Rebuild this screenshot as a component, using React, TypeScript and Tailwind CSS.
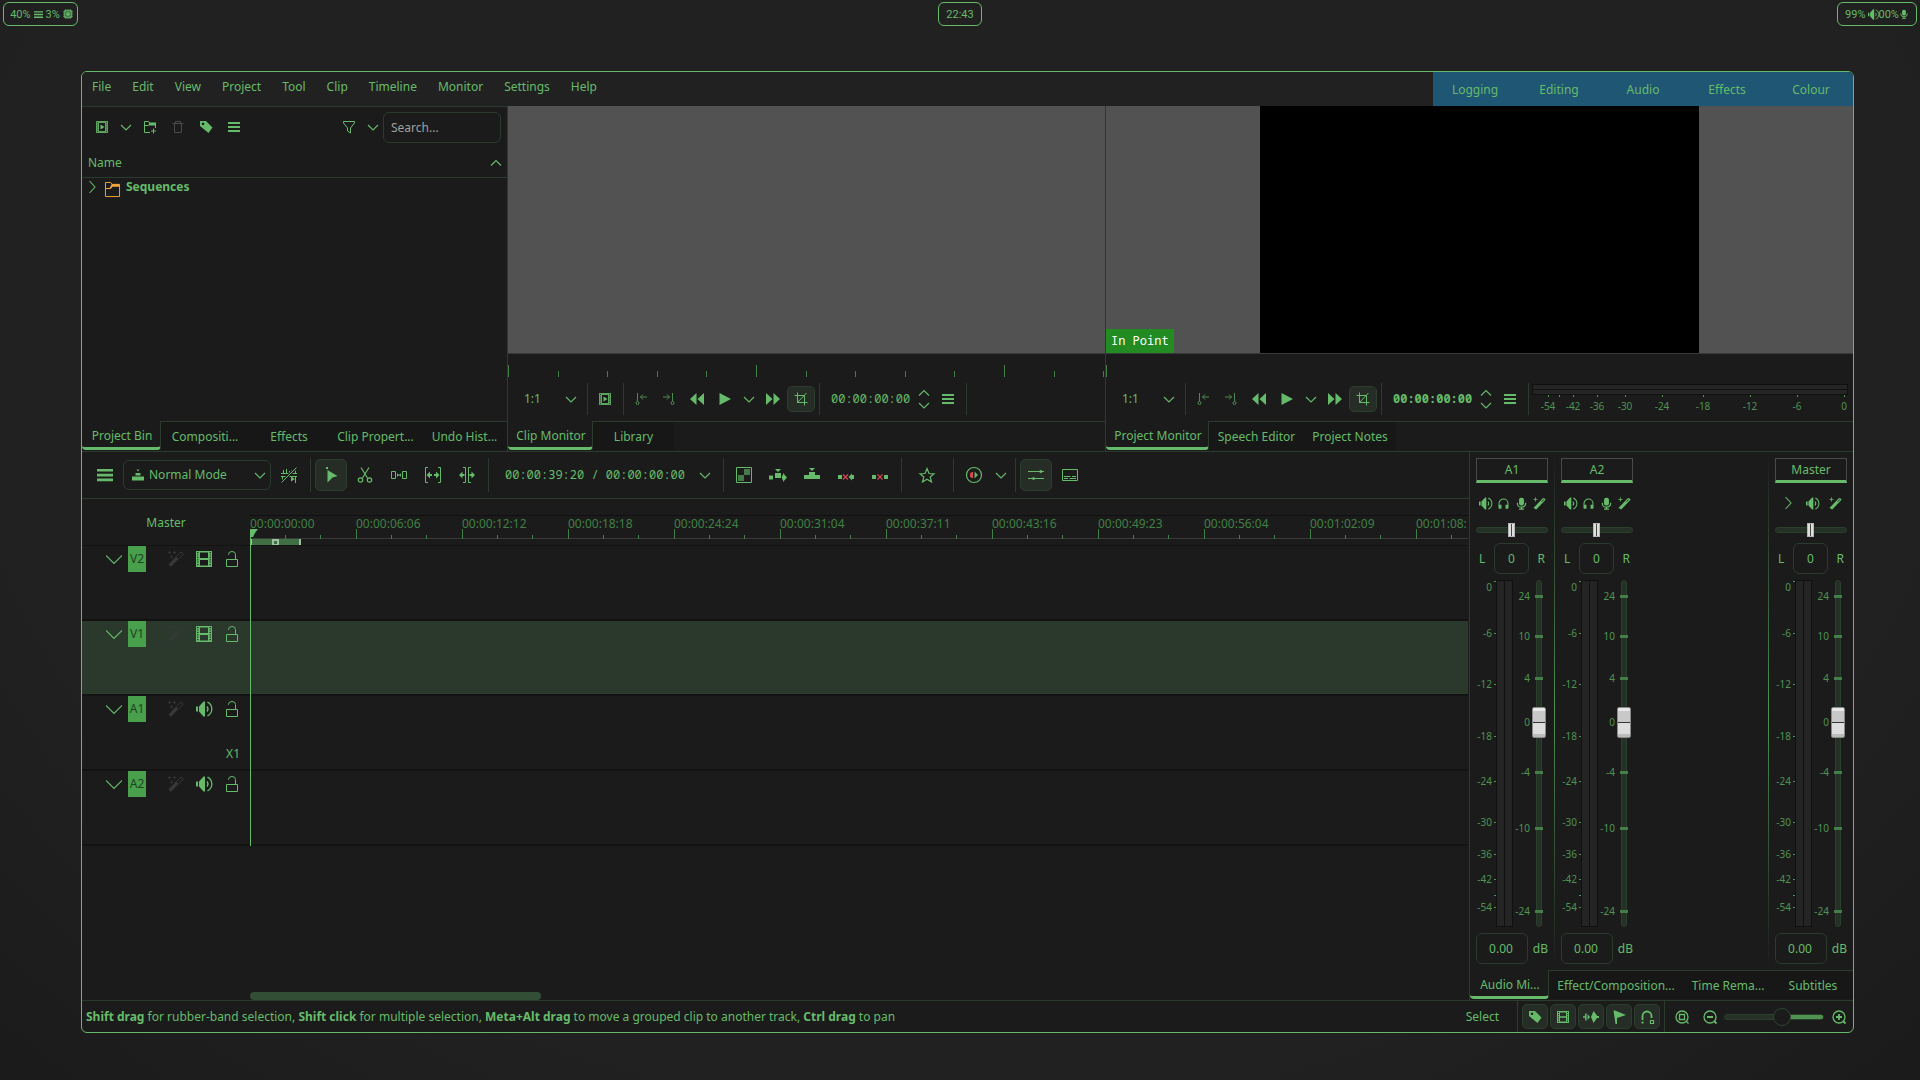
import React from "react";

const icons: Record<string, React.ReactNode> = {
  menu: <path d="M0 2h16v2.6H0zM0 6.8h16v2.6H0zM0 11.6h16v2.6H0z" fill="currentColor" />,
  menuSmall: <path d="M2 3h12v2H2zM2 7h12v2H2zM2 11h12v2H2z" fill="currentColor" />,
  clip: (
    <>
      <path d="M2 2h12v12H2zM5 4v8h6V4z" fill="currentColor" fillRule="evenodd" opacity=".85" />
      <path d="M3.500 3v10M12.500 3v10" stroke="#1b1b1b" strokeDasharray="1 1.250" opacity=".7" />
      <path d="M6.500 5.500v5l4-2.500z" fill="currentColor" />
    </>
  ),
  down: <path d="M3 6l5 5 5-5" fill="none" stroke="currentColor" strokeWidth="1.100" />,
  up: <path d="M3 10.500l5-5 5 5" fill="none" stroke="currentColor" strokeWidth="1.100" />,
  right: <path d="M5.500 2l5.500 6-5.500 6" fill="none" stroke="currentColor" strokeWidth="1.100" />,
  folderAdd: (
    <>
      <path d="M8 13.500H2.500v-11h4l1.500 2h5.500V9M2.500 6.500H6l2-1.500" fill="none" stroke="currentColor" />
      <path d="M7 3.500h7v3H7z" fill="currentColor" />
      <path d="M11.500 9.500v5M9 12h5" stroke="currentColor" />
    </>
  ),
  folder: (
    <>
      <path d="M.5 .5H6l1.500 2h8v13H.5z" fill="none" stroke="currentColor" />
      <path d="M7 2.500h8.500V5H8L6 7.500H1v-1h4z" fill="currentColor" />
    </>
  ),
  trash: <path d="M2.500 4.500h11M5.500 4.500v-2h5v2M4.500 5v8.500h7V5" fill="none" stroke="currentColor" />,
  tag: (
    <path d="M2 2h6l6.500 6.500-4 5.500L2 7zM5 3.500a1.300 1.300 0 1 0 .01 0z" fill="currentColor" fillRule="evenodd" />
  ),
  filter: <path d="M2.500 2.500h11v1.500L9.500 9v5l-3-2V9l-4-5z" fill="none" stroke="currentColor" />,
  markIn: (
    <>
      <path d="M4.500 2v8M14 6H7.500M10 3.500L7.500 6l2.500 2.500" fill="none" stroke="currentColor" />
      <circle cx="4.500" cy="12" r="1.500" fill="none" stroke="currentColor" />
    </>
  ),
  markOut: (
    <>
      <path d="M11.500 2v8M2 6h6.500M6 3.500L8.500 6 6 8.500" fill="none" stroke="currentColor" />
      <circle cx="11.500" cy="12" r="1.500" fill="none" stroke="currentColor" />
    </>
  ),
  rewind: <path d="M7.500 2v12L1 8zM15 2v12L8.500 8z" fill="currentColor" />,
  play: <path d="M2.500 2v12L14 8z" fill="currentColor" />,
  forward: <path d="M8.500 2v12L15 8zM1 2v12l6.500-6z" fill="currentColor" />,
  crop: <path d="M4.500 1.500v10h10M1.500 4.500h10v10M4 12L13.500 2" fill="none" stroke="currentColor" />,
  normal: <path d="M2 9.500h12v4H2zM5.500 6h5v2.500h-5zM6.500 2.500h3L8 4.500z" fill="currentColor" />,
  noSnap: (
    <>
      <path
        d="M0 6.500h16M0 9.500h16M2.500 3v3M5.500 2v4M8.500 4v2M1.500 10v4M4.500 10v3M10.500 3v3M14.500 1v5M14.500 10v6"
        stroke="currentColor"
        fill="none"
      />
      <path d="M10 9.500v5l4-2.500z" fill="currentColor" />
      <path d="M15.500 .5L.5 15.500" stroke="#1b1b1b" strokeWidth="3" />
      <path d="M15.500 .5L.5 15.500" stroke="currentColor" />
    </>
  ),
  pointer: <path d="M3 0h2v2H3zM4.500 3l10 6-5 1.500-5 5z" fill="currentColor" />,
  scissors: (
    <>
      <path d="M4 .5l6.500 10.500M12 .5L5.500 11" fill="none" stroke="currentColor" strokeWidth="1.200" />
      <circle cx="3.500" cy="13" r="2.200" fill="none" stroke="currentColor" strokeWidth="1.200" />
      <circle cx="12.500" cy="13" r="2.200" fill="none" stroke="currentColor" strokeWidth="1.200" />
    </>
  ),
  spacer: (
    <>
      <path d="M.5 4.500h4v7h-4zM11.500 4.500h4v7h-4zM6 8h4" fill="none" stroke="currentColor" />
      <path d="M6 6v4l1.500-2zM10 6v4L8.500 8z" fill="currentColor" />
    </>
  ),
  ripple: (
    <>
      <path d="M3 .5H.5v15H3M13 .5h2.500v15H13" fill="none" stroke="currentColor" />
      <path d="M1.500 8L5 4.500V7h2v2H5v2.500zM14.500 8L11 4.500V7H9v2h2v2.500z" fill="currentColor" />
    </>
  ),
  roll: (
    <>
      <path d="M4 .5h2.500v15H4M12 .5H9.500v15H12" fill="none" stroke="currentColor" />
      <path d="M0 8l3.500-3.500V7h2v2h-2v2.500zM16 8l-3.500-3.500V7h-2v2h2v2.500z" fill="currentColor" />
    </>
  ),
  checker: (
    <>
      <path d="M.5 .5h15v15H.5z" fill="none" stroke="currentColor" />
      <path d="M8 2h6v6H8zM2 8h6v6H2z" fill="currentColor" opacity=".6" />
    </>
  ),
  insert: <path d="M5 2h6L8 5zM5 6h6v5H5zM-1 8.500h4v4h-4zM12 8.500h1V6l4 4.500-4 4.500v-2.500h-1z" fill="currentColor" />,
  overwrite: <path d="M5 1h6L8 4zM5 5h6v3h5v4H0V8h5z" fill="currentColor" />,
  extract: (
    <>
      <path d="M0 8h4v4H0zM14 8h2v4h-2z" fill="currentColor" />
      <path d="M5 7.500l5 5M10 7.500l-5 5" stroke="#da4453" strokeWidth="1.200" />
      <path d="M10.500 10l3.500-3.500v7z" fill="currentColor" />
    </>
  ),
  lift: (
    <>
      <path d="M0 8h4v4H0zM12 8h4v4h-4z" fill="currentColor" />
      <path d="M5.500 7.500l5 5M10.500 7.500l-5 5" stroke="#da4453" strokeWidth="1.200" />
    </>
  ),
  star: (
    <path
      d="M8 1.500l2 5 5 .3-3.800 3.200 1.300 5L8 12.200 3.500 15l1.300-5L1 6.800l5-.3z"
      fill="none"
      stroke="currentColor"
      strokeWidth="1.200"
    />
  ),
  record: (
    <>
      <circle cx="8" cy="8" r="7.500" fill="none" stroke="currentColor" strokeWidth="1.200" />
      <path d="M7 5v6H5.500L4 9.500v-3L5.500 5z" fill="#da4453" />
      <path d="M8.500 4.500L12 8l-3.500 3.500z" fill="currentColor" />
    </>
  ),
  mixer: (
    <>
      <path d="M0 4.500h16M0 11.500h16" stroke="currentColor" />
      <path
        d="M11 4.500L13 3l1.500 1.500L13 6zM4 11.500L5.500 10 7 11.500 5.500 13z"
        fill="currentColor"
        stroke="currentColor"
        strokeWidth=".6"
      />
    </>
  ),
  subtitle: <path d="M.5 2.500h15v11H.5zM2 9.500h6.500M10 9.500h4M2 11.500h4M7.500 11.500H14" fill="none" stroke="currentColor" />,
  wand: (
    <>
      <path d="M.5 13.500l7.500-8 2.500 2.500L3 15.800z" fill="currentColor" />
      <path d="M8.500 5.500l4.500-4.500 2.300 2.300-4.500 4.500" fill="none" stroke="currentColor" />
      <path d="M1.500 0v3M0 1.500h3M6.500 0v3M5 1.500h3M3.500 4.500v3M2 6h3" stroke="currentColor" strokeWidth=".8" />
    </>
  ),
  film: (
    <>
      <path d="M0 0h16v16H0zM4 1.500v5.500h8V1.500zM4 9v5.500h8V9z" fill="currentColor" fillRule="evenodd" />
      <path d="M1.800 1v14M14.200 1v14" stroke="#1b1b1b" strokeWidth="1.200" strokeDasharray="1.200 1.200" />
    </>
  ),
  filmSmall: (
    <>
      <path d="M2 2h12v12H2zM5 3.500v3.700h6V3.500zM5 8.800v3.700h6V8.800z" fill="currentColor" fillRule="evenodd" />
      <path d="M3.500 3v10M12.500 3v10" stroke="#1b1b1b" strokeWidth="1" strokeDasharray="1 1.200" />
    </>
  ),
  lock: <path d="M2.500 8.500h11v7h-11zM4.500 4V3.500a3.500 3 0 0 1 7 0v5" fill="none" stroke="currentColor" />,
  speaker: (
    <>
      <path d="M0 5.500h2v5H0zM3 5.500L7.500 .5H9v15H7.500L3 10.500z" fill="currentColor" />
      <path d="M11 5.500a4 4 0 0 1 0 5M11.500 1.200a7.500 7.500 0 0 1 0 13.600" fill="none" stroke="currentColor" strokeWidth="1.300" />
    </>
  ),
  headphones: (
    <>
      <path d="M2.500 14V8a5.500 5.500 0 0 1 11 0v6" fill="none" stroke="currentColor" strokeWidth="1.300" />
      <path d="M2.500 9.500h3v5h-3zM10.500 9.500h3v5h-3z" fill="currentColor" />
    </>
  ),
  mic: (
    <>
      <rect x="5" y="1" width="6" height="9.500" rx="2.500" fill="currentColor" />
      <path d="M3 7v1.500a5 4 0 0 0 10 0V7M8 12v3M5 15h6" fill="none" stroke="currentColor" strokeWidth="1.500" />
    </>
  ),
  effects: (
    <>
      <path d="M.5 13.500L12 1.500h2l1.500 2L4 15.500z" fill="currentColor" />
      <path d="M10.500 5.500L13 3.500" stroke="#1b1b1b" strokeWidth="1.200" />
      <path d="M3 .5v5M.5 3h5" stroke="currentColor" />
    </>
  ),
  wave: <path d="M0 7.200h2V5l1.500-1v8L2 11V8.800H0zM4.500 5L7 8l-2.500 3zM8 8l2.500-6L14 6.500V7h2v2h-2L10.500 14z" fill="currentColor" />,
  flag: <path d="M2.500 1.500h1.500L15 6 6 9v6H4.500z" fill="currentColor" />,
  magnet: (
    <>
      <path d="M3.500 11V7a4.500 4.500 0 0 1 9 0v2" fill="none" stroke="currentColor" strokeWidth="1.800" />
      <path d="M2.500 12.500h2v2h-2z" fill="currentColor" />
      <path d="M11.500 11.500h3v3h-3z" fill="none" stroke="currentColor" strokeWidth="1.200" />
    </>
  ),
  zoomFit: (
    <>
      <circle cx="8" cy="8" r="6" fill="none" stroke="currentColor" strokeWidth="1.300" />
      <path d="M12.500 12.500l2 2M5.500 5.500h5v5h-5z" fill="none" stroke="currentColor" strokeWidth="1.300" />
    </>
  ),
  zoomOut: (
    <>
      <circle cx="8" cy="8" r="6" fill="none" stroke="currentColor" strokeWidth="1.300" />
      <path d="M12.500 12.500l2 2M5 8h6" stroke="currentColor" strokeWidth="1.800" />
    </>
  ),
  zoomIn: (
    <>
      <circle cx="8" cy="8" r="6" fill="none" stroke="currentColor" strokeWidth="1.300" />
      <path d="M12.500 12.500l2 2M5 8h6M8 5v6" stroke="currentColor" strokeWidth="1.800" />
    </>
  ),
  chip: (
    <>
      <path d="M0 4.500h16M0 8h16M0 11.500h16M4.500 0v16M8 0v16M11.500 0v16" fill="none" stroke="currentColor" strokeWidth="1.300" />
      <path d="M2 2h12v12H2z" fill="currentColor" />
      <path d="M4.500 4.500h7v7h-7z" fill="none" stroke="#212121" />
    </>
  ),
};

const Icon = ({ name, className = "size-4" }: { name: string; className?: string }) => (
  <svg viewBox="0 0 16 16" className={`shrink-0 overflow-visible ${className}`} aria-hidden="true">
    {icons[name]}
  </svg>
);

type ToolProps = { icon: string; label: string; className?: string; active?: boolean };

const Tool = ({ icon, label, className = "w-7", active = false }: ToolProps) => (
  <button
    aria-label={label}
    className={`flex h-[26px] shrink-0 items-center justify-center ${className} ${
      active ? "rounded-[5px] border border-[#2c3f2e] bg-[#252d26]" : ""
    }`}
  >
    <Icon name={icon} />
  </button>
);

const BigTool = ({ icon, label, className = "w-8", active = false }: ToolProps) => (
  <button
    aria-label={label}
    className={`flex h-8 shrink-0 items-center justify-center ${className} ${
      active ? "rounded-[5px] border border-[#2c3f2e] bg-[#252d26]" : ""
    }`}
  >
    <Icon name={icon} />
  </button>
);

const Sep = () => (
  <div className="flex w-2 shrink-0 justify-center self-stretch">
    <div className="w-px bg-[#2b3b2d]" />
  </div>
);

const BigSep = () => (
  <div className="flex h-[34px] w-1.5 shrink-0 justify-center">
    <div className="w-px bg-[#2b3b2d]" />
  </div>
);

const Tab = ({ label, active = false, className = "" }: { label: string; active?: boolean; className?: string }) => (
  <button
    role="tab"
    aria-selected={active}
    className={`h-[29px] truncate ${className} ${
      active
        ? "rounded-b-[4px] border-r border-b-[3px] border-r-[#2b3b2d] border-b-[#66bb6a] bg-[#1b1b1b] pt-1 pl-0.5"
        : "border-t border-[#2b3b2d] bg-[#171717] pt-0.5"
    }`}
  >
    {label}
  </button>
);

const StatusPill = ({ children, className = "" }: { children: React.ReactNode; className?: string }) => (
  <div
    className={`flex h-6 items-center justify-center rounded-[6px] border border-[#66bb6a] font-['Roboto',sans-serif] text-[11px] leading-none ${className}`}
  >
    {children}
  </div>
);

const TopBar = () => (
  <header className="grid grid-cols-3 items-start px-[3px] pt-0.5">
    <StatusPill className="w-[75px] gap-[3px] justify-self-start pl-0.5">
      <span>40%</span>
      <Icon name="menu" className="size-[9px]" />
      <span>3%</span>
      <Icon name="chip" className="size-[10px]" />
    </StatusPill>
    <StatusPill className="w-11 justify-self-center">22:43</StatusPill>
    <StatusPill className="w-20 justify-self-end">
      <span>99%</span>
      <Icon name="speaker" className="ml-0.5 size-[11px]" />
      <span>00%</span>
      <Icon name="mic" className="size-[10px]" />
    </StatusPill>
  </header>
);

const menus = ["File", "Edit", "View", "Project", "Tool", "Clip", "Timeline", "Monitor", "Settings", "Help"];
const workspaces = ["Logging", "Editing", "Audio", "Effects", "Colour"];

const MenuBar = () => (
  <nav className="flex h-[34px] items-stretch bg-[#212121]">
    <div className="flex items-start gap-[21px] pt-[5px] pl-2.5">
      {menus.map((menu) => (
        <button key={menu} className="leading-5">
          {menu}
        </button>
      ))}
    </div>
    <div className="ml-auto flex bg-[#1f5673] pt-0.5">
      {workspaces.map((name) => (
        <button key={name} className="w-[84px]">
          {name}
        </button>
      ))}
    </div>
  </nav>
);

const ProjectBin = () => (
  <section className="flex w-[425px] shrink-0 flex-col border-t border-[#2b3b2d]">
    <div className="flex h-10 items-center pr-1.5 pl-1.5">
      <Tool icon="clip" label="Add clip" />
      <Tool icon="down" label="Add clip menu" className="w-5" />
      <Tool icon="folderAdd" label="Create folder" />
      <Tool icon="trash" label="Delete" className="w-7 text-[#4a4a4a]" />
      <Tool icon="tag" label="Tags" />
      <Tool icon="menuSmall" label="Options" />
      <div className="flex-1" />
      <Tool icon="filter" label="Filter" />
      <Tool icon="down" label="Filter menu" className="w-5" />
      <input
        aria-label="Search"
        placeholder="Search..."
        className="h-[31px] w-[118px] rounded-[6px] border border-[#2b3b2d] bg-transparent px-[7px] placeholder:text-[#a0a0a0]"
      />
    </div>
    <button className="flex h-[31px] items-center justify-between border-b border-[#2b3b2d] pt-0.5 pr-[3px] pl-1.5">
      Name
      <Icon name="up" />
    </button>
    <ul role="tree" className="flex-1">
      <li role="treeitem" aria-expanded="false" className="flex h-[18px] items-center pl-0.5 font-bold">
        <Icon name="right" />
        <Icon name="folder" className="mt-1 ml-[5px] size-[15px] text-[#f6a93b]" />
        <span className="ml-1.5">Sequences</span>
      </li>
    </ul>
    <div role="tablist" className="flex h-[30px]">
      <Tab label="Project Bin" active className="w-[79px]" />
      <Tab label="Compositi..." className="w-[88px]" />
      <Tab label="Effects" className="w-20" />
      <Tab label="Clip Propert..." className="w-[93px]" />
      <Tab label="Undo Hist..." className="flex-1" />
    </div>
  </section>
);

const ZoomSelect = ({ id }: { id: string }) => (
  <div className="relative flex w-[67px] shrink-0 items-center">
    <select
      id={id}
      aria-label="Monitor zoom"
      className="h-8 w-full appearance-none bg-transparent pl-2 font-['Noto_Sans',sans-serif] text-[#66bb6a]"
    >
      <option>1:1</option>
    </select>
    <Icon name="down" className="pointer-events-none absolute right-1 size-4" />
  </div>
);

const Transport = ({ bold = false }: { bold?: boolean }) => (
  <>
    <Tool icon="markIn" label="Set zone in" className="w-7 opacity-70" />
    <Tool icon="markOut" label="Set zone out" className="w-7 opacity-70" />
    <Tool icon="rewind" label="Rewind" />
    <Tool icon="play" label="Play" />
    <Tool icon="down" label="Play menu" className="w-5" />
    <Tool icon="forward" label="Forward" />
    <Tool icon="crop" label="Edit mode" active />
    <Sep />
    <input
      aria-label="Monitor position"
      defaultValue="00:00:00:00"
      className={`w-[91px] shrink-0 bg-transparent pl-2 font-['Noto_Sans_Mono','DejaVu_Sans_Mono',monospace] ${
        bold ? "font-bold" : ""
      }`}
    />
    <div className="flex w-5 shrink-0 flex-col items-center">
      <button aria-label="Next frame" className="flex h-3 items-center">
        <Icon name="up" />
      </button>
      <button aria-label="Previous frame" className="flex h-3 items-center">
        <Icon name="down" />
      </button>
    </div>
    <Tool icon="menuSmall" label="Monitor options" />
    <Sep />
  </>
);

const ClipMonitor = () => (
  <section className="flex min-w-0 flex-1 flex-col border-l border-[#2b3b2d]">
    <div className="flex-1 border-b border-[#3a3a3a] bg-[#525252]" />
    <div className="h-[29px]">
      <svg className="h-full w-full" aria-hidden="true">
        {Array.from({ length: 13 }, (_, i) => (
          <rect key={i} x={Math.round(i * 49.6)} y={i % 5 ? 17 : 11} width="1" height={i % 5 ? 6 : 12} fill="#418045" />
        ))}
      </svg>
    </div>
    <div className="mb-1.5 flex h-8 items-center pl-2">
      <ZoomSelect id="clip-zoom" />
      <Sep />
      <Tool icon="clip" label="Clip" />
      <Sep />
      <Transport />
    </div>
    <div role="tablist" className="flex h-[30px]">
      <Tab label="Clip Monitor" active className="w-[85px]" />
      <Tab label="Library" className="w-[81px]" />
      <div className="flex-1 border-t border-[#2b3b2d]" />
    </div>
  </section>
);

const levels = [
  [16, "-54"],
  [27, ""],
  [41, "-42"],
  [65, "-36"],
  [93, "-30"],
  [130, "-24"],
  [171, "-18"],
  [218, "-12"],
  [265, "-6"],
  [312, "0"],
] as const;

const ProjectMonitor = () => (
  <section className="flex w-[748px] shrink-0 flex-col border-l border-[#2b3b2d]">
    <div className="flex flex-1 items-stretch border-b border-[#3a3a3a] bg-[#525252]">
      <div className="flex w-[154px] items-end">
        <span className="bg-[#228b22] px-[5px] font-['Noto_Sans_Mono','DejaVu_Sans_Mono',monospace] leading-6 text-white">
          In Point
        </span>
      </div>
      <div className="w-[439px] bg-black" />
    </div>
    <div className="h-[29px] pt-[11px]">
      <div className="h-3 w-px bg-[#418045]" />
    </div>
    <div className="mb-1.5 flex h-8 items-center pl-2">
      <ZoomSelect id="project-zoom" />
      <Sep />
      <Transport bold />
      <svg viewBox="0 0 316 32" className="h-8 w-[316px] shrink-0 overflow-visible" aria-label="Audio level">
        <rect x=".5" y="1.500" width="315" height="10" fill="#252525" stroke="#101010" />
        <rect x="0" y="6" width="316" height="1" fill="#101010" />
        {levels.map(([x, label]) => (
          <g key={x} fill="#4f9353">
            <rect x={x} y="12" width="1" height="2" />
            <text x={x} y="27" textAnchor="middle" fontSize="10">
              {label}
            </text>
          </g>
        ))}
      </svg>
    </div>
    <div role="tablist" className="flex h-[30px]">
      <Tab label="Project Monitor" active className="w-[103px]" />
      <Tab label="Speech Editor" className="w-[95px]" />
      <Tab label="Project Notes" className="w-[92px]" />
      <div className="flex-1 border-t border-[#2b3b2d]" />
    </div>
  </section>
);

const TimelineToolbar = () => (
  <div className="flex h-[47px] items-center gap-0.5 border-b border-[#2b3b2d] pl-[7px]">
    <BigTool icon="menu" label="Timeline menu" />
    <div className="relative flex w-[148px] shrink-0 items-center">
      <Icon name="normal" className="pointer-events-none absolute left-[7px] size-4" />
      <select
        aria-label="Edit mode"
        className="h-[30px] w-full appearance-none rounded-[6px] border border-[#2b3b2d] bg-transparent pl-[25px] text-[#66bb6a]"
      >
        <option>Normal Mode</option>
      </select>
      <Icon name="down" className="pointer-events-none absolute right-[3px] size-4" />
    </div>
    <BigTool icon="noSnap" label="Mix clips" />
    <BigSep />
    <BigTool icon="pointer" label="Selection tool" active />
    <BigTool icon="scissors" label="Razor tool" />
    <BigTool icon="spacer" label="Spacer tool" />
    <BigTool icon="ripple" label="Slip tool" />
    <BigTool icon="roll" label="Ripple tool" />
    <BigSep />
    <div className="flex w-[225px] shrink-0 items-center justify-between pr-[5px] pl-3">
      <span className="font-['Noto_Sans_Mono','DejaVu_Sans_Mono',monospace] whitespace-nowrap">
        00:00:39:20 / 00:00:00:00
      </span>
      <button aria-label="Timecode menu">
        <Icon name="down" />
      </button>
    </div>
    <BigSep />
    <BigTool icon="checker" label="Compositing" />
    <BigTool icon="insert" label="Insert zone" />
    <BigTool icon="overwrite" label="Overwrite zone" />
    <BigTool icon="extract" label="Extract zone" />
    <BigTool icon="lift" label="Lift zone" />
    <BigSep />
    <BigTool icon="star" label="Favourite effects" className="w-[42px]" />
    <BigSep />
    <BigTool icon="record" label="Timeline preview" />
    <BigTool icon="down" label="Preview menu" className="w-[18px]" />
    <BigSep />
    <BigTool icon="mixer" label="Audio mixer" active />
    <BigTool icon="subtitle" label="Subtitles" />
  </div>
);

const marks = [
  "00:00:00:00",
  "00:00:06:06",
  "00:00:12:12",
  "00:00:18:18",
  "00:00:24:24",
  "00:00:31:04",
  "00:00:37:11",
  "00:00:43:16",
  "00:00:49:23",
  "00:00:56:04",
  "00:01:02:09",
  "00:01:08:14",
];

const Ruler = () => (
  <div className="min-w-0 flex-1 overflow-hidden border-t border-[#101010]">
    <div className="flex h-[23px] border-b border-[#3a3a3a]">
      {marks.map((mark) => (
        <div key={mark} className="flex w-[106px] shrink-0 flex-col leading-4 text-[#418045]">
          <span className="h-[13px]">{mark}</span>
          <div className="flex h-2.5 items-end">
            <i className="h-2.5 w-[35px] border-l border-[#418045]" />
            <i className="h-1 w-[35px] border-l border-[#418045]" />
            <i className="h-1 w-9 border-l border-[#418045]" />
          </div>
        </div>
      ))}
    </div>
    <div className="flex h-[7px] w-[51px] items-center justify-center border-x-2 border-[#9fbfa1] bg-[#3f6f42]">
      <div className="size-[7px] border-2 border-[#9fbfa1]" />
    </div>
  </div>
);

const tracks = [
  { name: "V2", icon: "film", active: false, note: "" },
  { name: "V1", icon: "film", active: true, note: "" },
  { name: "A1", icon: "speaker", active: false, note: "X1" },
  { name: "A2", icon: "speaker", active: false, note: "" },
];

const TrackRow = ({ name, icon, active, note }: (typeof tracks)[number]) => (
  <div className="flex h-[75px] border-b-2 border-[#131313]">
    <div className={`flex w-[168px] shrink-0 flex-col justify-between pb-[7px] pl-6 ${active ? "bg-[#2b382c]" : ""}`}>
      <div className="flex items-center">
        <button aria-label={`Collapse ${name}`}>
          <svg viewBox="0 0 16 16" className="size-4" aria-hidden="true">
            <path d="M0 4.500l8 8 8-8" fill="none" stroke="currentColor" strokeWidth="1.100" />
          </svg>
        </button>
        <span className="ml-1.5 h-[26px] w-[18px] bg-[#489f4c] text-center leading-[26px] text-[#1d4420]">{name}</span>
        <button aria-label={`${name} effects`} className="ml-[22px] text-[#363936]">
          <Icon name="wand" />
        </button>
        <button aria-label={`Toggle ${name}`} className="ml-3">
          <Icon name={icon} />
        </button>
        <button aria-label={`Lock ${name}`} className="ml-3">
          <Icon name="lock" />
        </button>
      </div>
      <span className="pr-2.5 text-right leading-4">{note}</span>
    </div>
    <div className={`flex-1 ${active ? "bg-[#2b382c]" : ""}`} />
  </div>
);

const Timeline = () => (
  <section className="flex min-w-0 flex-1 flex-col">
    <TimelineToolbar />
    <div className="flex flex-1 flex-col pt-4">
      <div className="relative pr-px">
        <div className="flex h-[31px] border-b border-[#131313]">
          <div className="w-[168px] shrink-0 text-center leading-4">Master</div>
          <Ruler />
        </div>
        {tracks.map((track) => (
          <TrackRow key={track.name} {...track} />
        ))}
        <div className="pointer-events-none absolute top-[14px] bottom-0 left-[168px] w-px bg-[#66bb6a]">
          <svg viewBox="0 0 8 9" className="h-[9px] w-2" aria-hidden="true">
            <path d="M0 0h8L5 4 3 8H0z" fill="#66bb6a" />
          </svg>
        </div>
      </div>
      <div className="mt-auto pl-[168px]">
        <div className="h-2 w-[291px] rounded-[4px] bg-[#324e34]" />
      </div>
    </div>
  </section>
);

const meterScale = [
  [1, 7, "0"],
  [53, 53, "-6"],
  [104, 104, "-12"],
  [156, 156, "-18"],
  [201, 201, "-24"],
  [242, 242, "-30"],
  [274, 274, "-36"],
  [299, 299, "-42"],
  [315, 315, ""],
  [327, 327, "-54"],
] as const;

const faderScale = [
  [16, "24"],
  [56, "10"],
  [98, "4"],
  [142, "0"],
  [192, "-4"],
  [248, "-10"],
  [331, "-24"],
] as const;

const Strip = ({ name, tools }: { name: string; tools: string[] }) => (
  <div className="flex w-[84px] shrink-0 flex-col px-1.5 pt-1.5">
    <button className="h-[25px] border border-b-[3px] border-[#4a4a4a] border-b-[#66bb6a]">{name}</button>
    <div className="mt-3.5 flex h-3 items-center justify-around">
      {tools.map((tool) => (
        <button key={tool} aria-label={`${name} ${tool}`}>
          <Icon name={tool} className={tool === "right" ? "size-4" : "size-[13px]"} />
        </button>
      ))}
    </div>
    <input
      type="range"
      aria-label={`${name} balance`}
      defaultValue={49}
      className="mt-[18px] h-1.5 w-full appearance-none rounded-full border border-[#2b3f2d] bg-[#253026] [&::-webkit-slider-thumb]:h-3.5 [&::-webkit-slider-thumb]:w-[7px] [&::-webkit-slider-thumb]:appearance-none [&::-webkit-slider-thumb]:border [&::-webkit-slider-thumb]:border-[#b5b5b5] [&::-webkit-slider-thumb]:bg-[linear-gradient(90deg,#e0e0e0_2px,#444444_2px_3px,#e0e0e0_3px)]"
    />
    <div className="mt-2.5 flex items-center justify-between pr-[3px] pl-[3px]">
      <span>L</span>
      <input
        aria-label={`${name} balance value`}
        defaultValue="0"
        className="h-[31px] w-[35px] rounded-[6px] border border-[#2b3b2d] bg-transparent text-center"
      />
      <span>R</span>
    </div>
    <div className="relative mt-1.5 h-[347px]">
      <svg viewBox="0 0 72 347" className="h-full w-full overflow-visible" fill="#4f9353" fontSize="10">
        <rect x="20" y="0" width="17" height="347" fill="#101010" />
        <rect x="21" y="1" width="7" height="345" fill="#242424" />
        <rect x="29" y="1" width="7" height="345" fill="#242424" />
        {meterScale.map(([tick, y, label]) => (
          <g key={tick}>
            <rect x="18" y={tick} width="2" height="1" />
            <text x="16" y={y + 4} textAnchor="end">
              {label}
            </text>
          </g>
        ))}
        <rect x="60.500" y=".5" width="5" height="346" rx="2.500" fill="#253026" stroke="#2b3f2d" />
        {faderScale.map(([y, label]) => (
          <g key={y}>
            <rect x="59" y={y - 1} width="8" height="3" fill="#437d47" />
            <text x="54" y={y + 4} textAnchor="end">
              {label}
            </text>
          </g>
        ))}
      </svg>
      <input
        type="range"
        aria-label={`${name} volume`}
        max={316}
        defaultValue={189}
        className="absolute top-0 right-[2px] h-full w-[14px] appearance-none bg-transparent [direction:rtl] [writing-mode:vertical-lr] [&::-webkit-slider-thumb]:h-[31px] [&::-webkit-slider-thumb]:w-[14px] [&::-webkit-slider-thumb]:appearance-none [&::-webkit-slider-thumb]:rounded-[2px] [&::-webkit-slider-thumb]:border [&::-webkit-slider-thumb]:border-[#8a8a8a] [&::-webkit-slider-thumb]:bg-[linear-gradient(#e8e8e8_0_3px,#c8c8c8_3px_14px,#333333_14px_15px,#dddddd_15px_26px,#bbbbbb_26px)]"
      />
    </div>
    <div className="mt-1.5 flex items-center justify-between">
      <input
        aria-label={`${name} gain`}
        defaultValue="0.00"
        className="h-[31px] w-[52px] rounded-[6px] border border-[#2b3b2d] bg-transparent pr-0.5 text-center"
      />
      <span>dB</span>
    </div>
  </div>
);

const FadeLine = () => (
  <div className="w-px shrink-0 bg-linear-to-b from-transparent via-[#4f9353] to-transparent" />
);

const AudioMixer = () => (
  <section className="flex w-96 shrink-0 flex-col border-l border-[#2b3b2d]">
    <div className="flex flex-1">
      <Strip name="A1" tools={["speaker", "headphones", "mic", "effects"]} />
      <FadeLine />
      <Strip name="A2" tools={["speaker", "headphones", "mic", "effects"]} />
      <div className="flex-1" />
      <FadeLine />
      <Strip name="Master" tools={["right", "speaker", "effects"]} />
    </div>
    <div role="tablist" className="flex h-[30px]">
      <Tab label="Audio Mi..." active className="w-[79px]" />
      <Tab label="Effect/Composition..." className="w-[134px]" />
      <Tab label="Time Rema..." className="w-[90px]" />
      <Tab label="Subtitles" className="flex-1" />
    </div>
  </section>
);

const toggles = [
  ["tag", "Show tags"],
  ["filmSmall", "Show video thumbnails"],
  ["wave", "Show audio thumbnails"],
  ["flag", "Show markers"],
  ["magnet", "Snap"],
];

const StatusBar = () => (
  <footer className="flex h-8 items-center border-t border-[#2b3b2d] pl-1">
    <p className="whitespace-nowrap">
      <b>Shift drag</b> for rubber-band selection, <b>Shift click</b> for multiple selection, <b>Meta+Alt drag</b> to
      move a grouped clip to another track, <b>Ctrl drag</b> to pan
    </p>
    <span className="mr-3.5 ml-auto">Select</span>
    <Sep />
    <div className="ml-px flex gap-0.5">
      {toggles.map(([icon, label]) => (
        <button
          key={icon}
          aria-label={label}
          aria-pressed="true"
          className="flex h-[25px] w-[26px] items-center justify-center rounded-[5px] border border-[#2c3f2e] bg-[#252d26]"
        >
          <Icon name={icon} />
        </button>
      ))}
    </div>
    <Sep />
    <Tool icon="zoomFit" label="Fit zoom" />
    <Tool icon="zoomOut" label="Zoom out" />
    <input
      type="range"
      aria-label="Timeline zoom"
      defaultValue={60}
      className="h-1.5 w-[100px] shrink-0 appearance-none rounded-full border border-[#2b3f2d] bg-[linear-gradient(90deg,#253026_60%,#4f9353_60%)] [&::-webkit-slider-thumb]:size-[18px] [&::-webkit-slider-thumb]:appearance-none [&::-webkit-slider-thumb]:rounded-full [&::-webkit-slider-thumb]:border [&::-webkit-slider-thumb]:border-[#2f4431] [&::-webkit-slider-thumb]:bg-[#1b1b1b]"
    />
    <Tool icon="zoomIn" label="Zoom in" className="w-[29px]" />
  </footer>
);

const App = () => {
  return (
    <div className="flex min-h-screen flex-col bg-[radial-gradient(ellipse_at_50%_30%,#212121_70%,#1b1b1c_100%)] font-['Noto_Sans',sans-serif] text-xs text-[#66bb6a]">
      <TopBar />
      <main className="mt-[45px] mr-[66px] mb-[47px] ml-[81px] flex flex-1 flex-col overflow-hidden rounded-[6px] border border-[#66bb6a] bg-[#1b1b1b]">
        <MenuBar />
        <div className="flex h-[346px] border-b border-[#2b3b2d]">
          <ProjectBin />
          <ClipMonitor />
          <ProjectMonitor />
        </div>
        <div className="flex flex-1">
          <Timeline />
          <AudioMixer />
        </div>
        <StatusBar />
      </main>
    </div>
  );
};

export default App;
